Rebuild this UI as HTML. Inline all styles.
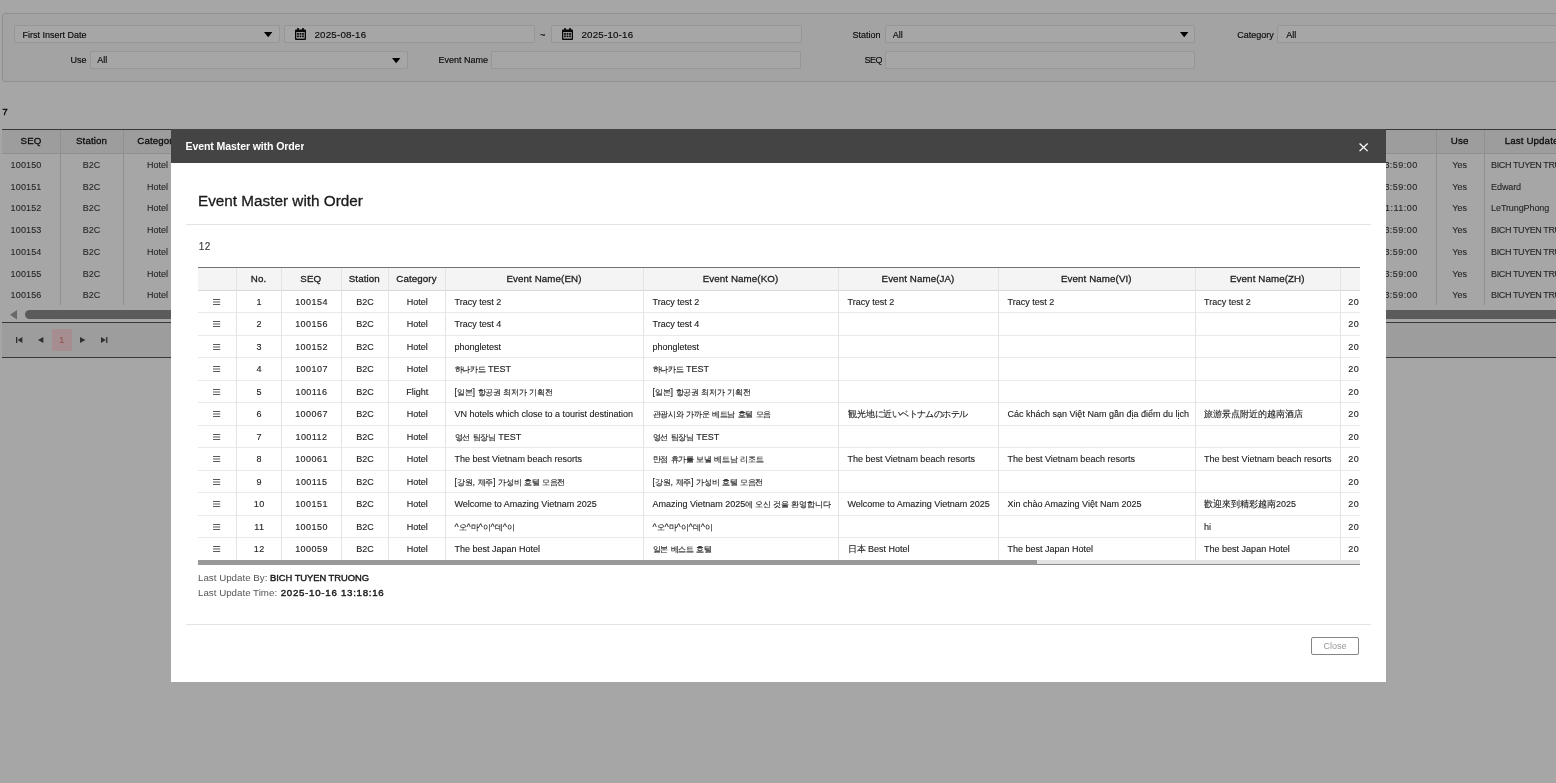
<!DOCTYPE html>
<html lang="en"><head><meta charset="utf-8"><title>Event Master with Order</title>
<style>
html,body{margin:0;padding:0;}
body{width:1556px;height:783px;overflow:hidden;position:relative;background:#fff;font-family:"Liberation Sans",sans-serif;}
#page,#dim,#modal{position:absolute;left:0;top:0;width:1556px;height:783px;overflow:hidden;}
#page,#modal{will-change:transform;}
#dim{background:rgba(0,0,0,.35);}
div{position:absolute;}
.t{white-space:nowrap;overflow:hidden;}
.a{position:absolute;display:block;overflow:visible;}
b{font-weight:normal;color:#1c1c1c;-webkit-text-stroke:.42px #1c1c1c;}
i{font-style:normal;display:inline-block;text-align:center;overflow:visible;white-space:nowrap;}
.k{font-size:8.3px;width:7.8px;}
.n{font-size:8.8px;width:8.4px;}
.h{width:9px;}
</style></head><body>
<div id="page">
<div style="left:2px;top:13px;width:1600px;height:66.5px;border:1px solid #dedede;border-radius:3px;background:#fbfafb;"></div>
<div style="left:14px;top:25px;width:265.5px;height:17.5px;border:1px solid #e6e6e6;border-radius:2px;background:#fff;box-sizing:border-box;"></div>
<div class="t" style="left:22.6px;top:27.0px;height:17.5px;line-height:17.5px;font-size:9px;color:#111;-webkit-text-stroke:.15px #111;">First Insert Date</div>
<svg class="a" style="left:263.8px;top:31.799999999999997px" width="8.4" height="5.2" viewBox="0 0 84 52"><path d="M0 0H84L42 52Z" fill="#000"/></svg>
<div style="left:284px;top:25px;width:250.5px;height:17.5px;border:1px solid #e6e6e6;border-radius:2px;background:#fff;box-sizing:border-box;"></div>
<svg class="a" style="left:295px;top:28px" width="11" height="12" viewBox="0 0 110 120"><path d="M22 0h16v14h34V0h16v14h12q10 0 10 10v86q0 10 -10 10H10q-10 0 -10 -10V24q0 -10 10 -10h12Z" fill="#0a0a0a"/><rect x="13" y="40" width="84" height="66" fill="#fff"/><rect x="21" y="49" width="18" height="19" fill="#111"/><rect x="46" y="49" width="18" height="19" fill="#111"/><rect x="71" y="49" width="18" height="19" fill="#111"/><rect x="21" y="75" width="18" height="17" fill="#111"/><rect x="46" y="75" width="18" height="17" fill="#111"/><rect x="71" y="75" width="18" height="17" fill="#111"/></svg>
<div class="t" style="left:314.5px;top:26.0px;height:17.5px;line-height:17.5px;font-size:9px;color:#111;-webkit-text-stroke:.15px #111;font-size:9.75px;letter-spacing:.19px;">2025-08-16</div>
<div class="t" style="left:540px;top:27.0px;height:17.5px;line-height:17.5px;font-size:9px;color:#111;-webkit-text-stroke:.15px #111;">~</div>
<div style="left:550.5px;top:25px;width:251.0px;height:17.5px;border:1px solid #e6e6e6;border-radius:2px;background:#fff;box-sizing:border-box;"></div>
<svg class="a" style="left:562px;top:28px" width="11" height="12" viewBox="0 0 110 120"><path d="M22 0h16v14h34V0h16v14h12q10 0 10 10v86q0 10 -10 10H10q-10 0 -10 -10V24q0 -10 10 -10h12Z" fill="#0a0a0a"/><rect x="13" y="40" width="84" height="66" fill="#fff"/><rect x="21" y="49" width="18" height="19" fill="#111"/><rect x="46" y="49" width="18" height="19" fill="#111"/><rect x="71" y="49" width="18" height="19" fill="#111"/><rect x="21" y="75" width="18" height="17" fill="#111"/><rect x="46" y="75" width="18" height="17" fill="#111"/><rect x="71" y="75" width="18" height="17" fill="#111"/></svg>
<div class="t" style="left:581.5px;top:26.0px;height:17.5px;line-height:17.5px;font-size:9px;color:#111;-webkit-text-stroke:.15px #111;font-size:9.75px;letter-spacing:.19px;">2025-10-16</div>
<div class="t" style="left:852.4px;top:27.0px;height:17.5px;line-height:17.5px;font-size:9px;color:#111;-webkit-text-stroke:.15px #111;">Station</div>
<div style="left:884.5px;top:25px;width:310.5px;height:17.5px;border:1px solid #e6e6e6;border-radius:2px;background:#fff;box-sizing:border-box;"></div>
<div class="t" style="left:892.8px;top:27.0px;height:17.5px;line-height:17.5px;font-size:9px;color:#111;-webkit-text-stroke:.15px #111;">All</div>
<svg class="a" style="left:1179.8px;top:31.799999999999997px" width="8.4" height="5.2" viewBox="0 0 84 52"><path d="M0 0H84L42 52Z" fill="#000"/></svg>
<div class="t" style="left:1237.2px;top:27.0px;height:17.5px;line-height:17.5px;font-size:9px;color:#111;-webkit-text-stroke:.15px #111;">Category</div>
<div style="left:1277.3px;top:25px;width:322.70000000000005px;height:17.5px;border:1px solid #e6e6e6;border-radius:2px;background:#fff;box-sizing:border-box;"></div>
<div class="t" style="left:1286.3px;top:27.0px;height:17.5px;line-height:17.5px;font-size:9px;color:#111;-webkit-text-stroke:.15px #111;">All</div>
<div class="t" style="left:70.5px;top:51.6px;height:17.5px;line-height:17.5px;font-size:9px;color:#111;-webkit-text-stroke:.15px #111;">Use</div>
<div style="left:90px;top:51px;width:317.5px;height:17.5px;border:1px solid #e6e6e6;border-radius:2px;background:#fff;box-sizing:border-box;"></div>
<div class="t" style="left:97.3px;top:51.6px;height:17.5px;line-height:17.5px;font-size:9px;color:#111;-webkit-text-stroke:.15px #111;">All</div>
<svg class="a" style="left:391.8px;top:57.8px" width="8.4" height="5.2" viewBox="0 0 84 52"><path d="M0 0H84L42 52Z" fill="#000"/></svg>
<div class="t" style="left:438.5px;top:51.6px;height:17.5px;line-height:17.5px;font-size:9px;color:#111;-webkit-text-stroke:.15px #111;">Event Name</div>
<div style="left:490.7px;top:51px;width:310.8px;height:17.5px;border:1px solid #e6e6e6;border-radius:2px;background:#fff;box-sizing:border-box;"></div>
<div class="t" style="left:864.6px;top:51.6px;height:17.5px;line-height:17.5px;font-size:9px;color:#111;-webkit-text-stroke:.15px #111;letter-spacing:-.55px;">SEQ</div>
<div style="left:884.5px;top:51px;width:310.5px;height:17.5px;border:1px solid #e6e6e6;border-radius:2px;background:#fff;box-sizing:border-box;"></div>
<div class="t" style="left:2.3px;top:103.6px;height:15px;line-height:15px;font-size:9.9px;color:#000;-webkit-text-stroke:.3px #000;">7</div>
<div style="left:2px;top:129px;width:1600px;height:1px;background:#555;"></div>
<div style="left:2px;top:130px;width:1600px;height:24px;background:#f1f1f1;border-bottom:1px solid #dcdcdc;box-sizing:border-box;"></div>
<div style="left:60px;top:130px;width:1px;height:174.5px;background:#dedede;"></div>
<div style="left:123px;top:130px;width:1px;height:174.5px;background:#dedede;"></div>
<div style="left:1435.6px;top:130px;width:1px;height:174.5px;background:#dedede;"></div>
<div style="left:1483.6px;top:130px;width:1px;height:174.5px;background:#dedede;"></div>
<div class="t" style="left:2px;top:129px;width:58px;height:24px;line-height:24px;font-size:9.75px;color:#111;text-align:center;-webkit-text-stroke:.28px #111;letter-spacing:.1px;">SEQ</div>
<div class="t" style="left:60px;top:129px;width:63px;height:24px;line-height:24px;font-size:9.75px;color:#111;text-align:center;-webkit-text-stroke:.28px #111;letter-spacing:.1px;">Station</div>
<div class="t" style="left:123px;top:129px;width:69px;height:24px;line-height:24px;font-size:9.75px;color:#111;text-align:center;-webkit-text-stroke:.28px #111;letter-spacing:.1px;">Category</div>
<div class="t" style="left:1435.6px;top:129px;width:48px;height:24px;line-height:24px;font-size:9.75px;color:#111;text-align:center;-webkit-text-stroke:.28px #111;letter-spacing:.1px;">Use</div>
<div class="t" style="left:1483.6px;top:129px;width:110.5px;height:24px;line-height:24px;font-size:9.75px;color:#111;text-align:center;-webkit-text-stroke:.28px #111;letter-spacing:.1px;">Last Update By</div>
<div class="t" style="left:10.6px;top:154.95px;height:21.75px;line-height:21.75px;font-size:9px;color:#3a3a3a;-webkit-text-stroke:.1px #3a3a3a;letter-spacing:.15px;">100150</div>
<div class="t" style="left:60px;top:154.95px;width:63px;height:21.75px;line-height:21.75px;font-size:9px;color:#3a3a3a;-webkit-text-stroke:.1px #3a3a3a;text-align:center;">B2C</div>
<div class="t" style="left:123px;top:154.95px;width:69px;height:21.75px;line-height:21.75px;font-size:9px;color:#3a3a3a;-webkit-text-stroke:.1px #3a3a3a;text-align:center;">Hotel</div>
<div class="t" style="left:1297.6px;top:154.95px;width:120px;height:21.75px;line-height:21.75px;font-size:9px;color:#3a3a3a;-webkit-text-stroke:.1px #3a3a3a;text-align:right;letter-spacing:.45px;">2025-12-31 23:59:00</div>
<div class="t" style="left:1435.6px;top:154.95px;width:48px;height:21.75px;line-height:21.75px;font-size:9px;color:#3a3a3a;-webkit-text-stroke:.1px #3a3a3a;text-align:center;">Yes</div>
<div class="t" style="left:1491.1px;top:154.95px;height:21.75px;line-height:21.75px;font-size:9px;color:#3a3a3a;-webkit-text-stroke:.1px #3a3a3a;letter-spacing:-.4px;">BICH TUYEN TRUONG</div>
<div class="t" style="left:10.6px;top:176.7px;height:21.75px;line-height:21.75px;font-size:9px;color:#3a3a3a;-webkit-text-stroke:.1px #3a3a3a;letter-spacing:.15px;">100151</div>
<div class="t" style="left:60px;top:176.7px;width:63px;height:21.75px;line-height:21.75px;font-size:9px;color:#3a3a3a;-webkit-text-stroke:.1px #3a3a3a;text-align:center;">B2C</div>
<div class="t" style="left:123px;top:176.7px;width:69px;height:21.75px;line-height:21.75px;font-size:9px;color:#3a3a3a;-webkit-text-stroke:.1px #3a3a3a;text-align:center;">Hotel</div>
<div class="t" style="left:1297.6px;top:176.7px;width:120px;height:21.75px;line-height:21.75px;font-size:9px;color:#3a3a3a;-webkit-text-stroke:.1px #3a3a3a;text-align:right;letter-spacing:.45px;">2025-12-31 23:59:00</div>
<div class="t" style="left:1435.6px;top:176.7px;width:48px;height:21.75px;line-height:21.75px;font-size:9px;color:#3a3a3a;-webkit-text-stroke:.1px #3a3a3a;text-align:center;">Yes</div>
<div class="t" style="left:1491.1px;top:176.7px;height:21.75px;line-height:21.75px;font-size:9px;color:#3a3a3a;-webkit-text-stroke:.1px #3a3a3a;letter-spacing:-.1px;">Edward</div>
<div class="t" style="left:10.6px;top:198.45px;height:21.75px;line-height:21.75px;font-size:9px;color:#3a3a3a;-webkit-text-stroke:.1px #3a3a3a;letter-spacing:.15px;">100152</div>
<div class="t" style="left:60px;top:198.45px;width:63px;height:21.75px;line-height:21.75px;font-size:9px;color:#3a3a3a;-webkit-text-stroke:.1px #3a3a3a;text-align:center;">B2C</div>
<div class="t" style="left:123px;top:198.45px;width:69px;height:21.75px;line-height:21.75px;font-size:9px;color:#3a3a3a;-webkit-text-stroke:.1px #3a3a3a;text-align:center;">Hotel</div>
<div class="t" style="left:1297.6px;top:198.45px;width:120px;height:21.75px;line-height:21.75px;font-size:9px;color:#3a3a3a;-webkit-text-stroke:.1px #3a3a3a;text-align:right;letter-spacing:.45px;">2025-12-31 11:11:00</div>
<div class="t" style="left:1435.6px;top:198.45px;width:48px;height:21.75px;line-height:21.75px;font-size:9px;color:#3a3a3a;-webkit-text-stroke:.1px #3a3a3a;text-align:center;">Yes</div>
<div class="t" style="left:1491.1px;top:198.45px;height:21.75px;line-height:21.75px;font-size:9px;color:#3a3a3a;-webkit-text-stroke:.1px #3a3a3a;letter-spacing:-.1px;">LeTrungPhong</div>
<div class="t" style="left:10.6px;top:220.2px;height:21.75px;line-height:21.75px;font-size:9px;color:#3a3a3a;-webkit-text-stroke:.1px #3a3a3a;letter-spacing:.15px;">100153</div>
<div class="t" style="left:60px;top:220.2px;width:63px;height:21.75px;line-height:21.75px;font-size:9px;color:#3a3a3a;-webkit-text-stroke:.1px #3a3a3a;text-align:center;">B2C</div>
<div class="t" style="left:123px;top:220.2px;width:69px;height:21.75px;line-height:21.75px;font-size:9px;color:#3a3a3a;-webkit-text-stroke:.1px #3a3a3a;text-align:center;">Hotel</div>
<div class="t" style="left:1297.6px;top:220.2px;width:120px;height:21.75px;line-height:21.75px;font-size:9px;color:#3a3a3a;-webkit-text-stroke:.1px #3a3a3a;text-align:right;letter-spacing:.45px;">2025-12-31 23:59:00</div>
<div class="t" style="left:1435.6px;top:220.2px;width:48px;height:21.75px;line-height:21.75px;font-size:9px;color:#3a3a3a;-webkit-text-stroke:.1px #3a3a3a;text-align:center;">Yes</div>
<div class="t" style="left:1491.1px;top:220.2px;height:21.75px;line-height:21.75px;font-size:9px;color:#3a3a3a;-webkit-text-stroke:.1px #3a3a3a;letter-spacing:-.4px;">BICH TUYEN TRUONG</div>
<div class="t" style="left:10.6px;top:241.95px;height:21.75px;line-height:21.75px;font-size:9px;color:#3a3a3a;-webkit-text-stroke:.1px #3a3a3a;letter-spacing:.15px;">100154</div>
<div class="t" style="left:60px;top:241.95px;width:63px;height:21.75px;line-height:21.75px;font-size:9px;color:#3a3a3a;-webkit-text-stroke:.1px #3a3a3a;text-align:center;">B2C</div>
<div class="t" style="left:123px;top:241.95px;width:69px;height:21.75px;line-height:21.75px;font-size:9px;color:#3a3a3a;-webkit-text-stroke:.1px #3a3a3a;text-align:center;">Hotel</div>
<div class="t" style="left:1297.6px;top:241.95px;width:120px;height:21.75px;line-height:21.75px;font-size:9px;color:#3a3a3a;-webkit-text-stroke:.1px #3a3a3a;text-align:right;letter-spacing:.45px;">2025-12-31 23:59:00</div>
<div class="t" style="left:1435.6px;top:241.95px;width:48px;height:21.75px;line-height:21.75px;font-size:9px;color:#3a3a3a;-webkit-text-stroke:.1px #3a3a3a;text-align:center;">Yes</div>
<div class="t" style="left:1491.1px;top:241.95px;height:21.75px;line-height:21.75px;font-size:9px;color:#3a3a3a;-webkit-text-stroke:.1px #3a3a3a;letter-spacing:-.4px;">BICH TUYEN TRUONG</div>
<div class="t" style="left:10.6px;top:263.7px;height:21.75px;line-height:21.75px;font-size:9px;color:#3a3a3a;-webkit-text-stroke:.1px #3a3a3a;letter-spacing:.15px;">100155</div>
<div class="t" style="left:60px;top:263.7px;width:63px;height:21.75px;line-height:21.75px;font-size:9px;color:#3a3a3a;-webkit-text-stroke:.1px #3a3a3a;text-align:center;">B2C</div>
<div class="t" style="left:123px;top:263.7px;width:69px;height:21.75px;line-height:21.75px;font-size:9px;color:#3a3a3a;-webkit-text-stroke:.1px #3a3a3a;text-align:center;">Hotel</div>
<div class="t" style="left:1297.6px;top:263.7px;width:120px;height:21.75px;line-height:21.75px;font-size:9px;color:#3a3a3a;-webkit-text-stroke:.1px #3a3a3a;text-align:right;letter-spacing:.45px;">2025-12-31 23:59:00</div>
<div class="t" style="left:1435.6px;top:263.7px;width:48px;height:21.75px;line-height:21.75px;font-size:9px;color:#3a3a3a;-webkit-text-stroke:.1px #3a3a3a;text-align:center;">Yes</div>
<div class="t" style="left:1491.1px;top:263.7px;height:21.75px;line-height:21.75px;font-size:9px;color:#3a3a3a;-webkit-text-stroke:.1px #3a3a3a;letter-spacing:-.4px;">BICH TUYEN TRUONG</div>
<div class="t" style="left:10.6px;top:285.45px;height:21.75px;line-height:21.75px;font-size:9px;color:#3a3a3a;-webkit-text-stroke:.1px #3a3a3a;letter-spacing:.15px;">100156</div>
<div class="t" style="left:60px;top:285.45px;width:63px;height:21.75px;line-height:21.75px;font-size:9px;color:#3a3a3a;-webkit-text-stroke:.1px #3a3a3a;text-align:center;">B2C</div>
<div class="t" style="left:123px;top:285.45px;width:69px;height:21.75px;line-height:21.75px;font-size:9px;color:#3a3a3a;-webkit-text-stroke:.1px #3a3a3a;text-align:center;">Hotel</div>
<div class="t" style="left:1297.6px;top:285.45px;width:120px;height:21.75px;line-height:21.75px;font-size:9px;color:#3a3a3a;-webkit-text-stroke:.1px #3a3a3a;text-align:right;letter-spacing:.45px;">2025-12-31 23:59:00</div>
<div class="t" style="left:1435.6px;top:285.45px;width:48px;height:21.75px;line-height:21.75px;font-size:9px;color:#3a3a3a;-webkit-text-stroke:.1px #3a3a3a;text-align:center;">Yes</div>
<div class="t" style="left:1491.1px;top:285.45px;height:21.75px;line-height:21.75px;font-size:9px;color:#3a3a3a;-webkit-text-stroke:.1px #3a3a3a;letter-spacing:-.4px;">BICH TUYEN TRUONG</div>
<svg class="a" style="left:10px;top:310px" width="7" height="9.4" viewBox="0 0 70 94"><path d="M70 0V94L0 47Z" fill="#a0a0a0"/></svg>
<div style="left:25px;top:310px;width:1600px;height:8.8px;background:#8c8c8c;border-radius:4.5px;"></div>
<div style="left:2px;top:322px;width:1600px;height:1px;background:#555;"></div>
<div style="left:2px;top:323px;width:1600px;height:34px;background:#f1f1f1;"></div>
<div style="left:2px;top:357px;width:1600px;height:1px;background:#555;"></div>
<div style="left:51.6px;top:329px;width:20.4px;height:22px;background:#ffd9dc;"></div>
<div class="t" style="left:51.6px;top:329px;width:20.4px;height:22px;line-height:22px;font-size:9.75px;color:#e07b75;text-align:center;">1</div>
<svg class="a" style="left:15.6px;top:336.9px" width="6.4" height="6" viewBox="0 0 64 60"><rect x="0" y="0" width="13" height="60" fill="#4a4a4a"/><path d="M64 0V60L16 30Z" fill="#4a4a4a"/></svg>
<svg class="a" style="left:37.8px;top:336.9px" width="5.4" height="6" viewBox="0 0 54 60"><path d="M54 0V60L0 30Z" fill="#4a4a4a"/></svg>
<svg class="a" style="left:80.1px;top:336.9px" width="5.4" height="6" viewBox="0 0 54 60"><path d="M0 0V60L54 30Z" fill="#4a4a4a"/></svg>
<svg class="a" style="left:100.8px;top:336.9px" width="6.4" height="6" viewBox="0 0 64 60"><rect x="51" y="0" width="13" height="60" fill="#4a4a4a"/><path d="M0 0V60L48 30Z" fill="#4a4a4a"/></svg>
</div>
<div id="dim"></div>
<div id="modal">
<div style="left:171px;top:129px;width:1215px;height:553px;background:#fff;"></div>
<div style="left:171px;top:129px;width:1215px;height:33.5px;background:#444;"></div>
<div class="t" style="left:185.5px;top:130px;height:33.5px;line-height:33.5px;font-size:10.6px;font-weight:bold;color:#fff;letter-spacing:-.13px;">Event Master with Order</div>
<svg class="a" style="left:1358.8px;top:142.9px" width="9.2" height="8.6" preserveAspectRatio="none" viewBox="0 0 100 100"><path d="M6 6L94 94M94 6L6 94" stroke="#fff" stroke-width="14" fill="none"/></svg>
<div class="t" style="left:198px;top:190px;height:22px;line-height:22px;font-size:15.3px;color:#1a1a1a;-webkit-text-stroke:.3px #1a1a1a;">Event Master with Order</div>
<div style="left:186px;top:224px;width:1185px;height:1px;background:#e4e4e4;"></div>
<div class="t" style="left:198.8px;top:238.6px;height:15px;line-height:15px;font-size:10px;color:#3a3a3a;letter-spacing:.5px;-webkit-text-stroke:.15px #3a3a3a;">12</div>
<div style="left:198px;top:267px;width:1162px;height:1px;background:#727272;"></div>
<div style="left:198px;top:268px;width:1162px;height:22.80000000000001px;background:#f4f4f4;border-bottom:1px solid #d8d8d8;box-sizing:border-box;"></div>
<div style="left:198px;top:267px;width:1162px;height:293px;overflow:hidden;"><div class="t" style="left:38px;top:1px;width:45px;height:22.80000000000001px;line-height:22.80000000000001px;font-size:9.75px;color:#1c1c1c;text-align:center;-webkit-text-stroke:.28px #1c1c1c;letter-spacing:.1px;">No.</div><div class="t" style="left:83px;top:1px;width:59.5px;height:22.80000000000001px;line-height:22.80000000000001px;font-size:9.75px;color:#1c1c1c;text-align:center;-webkit-text-stroke:.28px #1c1c1c;letter-spacing:.1px;">SEQ</div><div class="t" style="left:142.5px;top:1px;width:47.5px;height:22.80000000000001px;line-height:22.80000000000001px;font-size:9.75px;color:#1c1c1c;text-align:center;-webkit-text-stroke:.28px #1c1c1c;letter-spacing:.1px;">Station</div><div class="t" style="left:190px;top:1px;width:57px;height:22.80000000000001px;line-height:22.80000000000001px;font-size:9.75px;color:#1c1c1c;text-align:center;-webkit-text-stroke:.28px #1c1c1c;letter-spacing:.1px;">Category</div><div class="t" style="left:247px;top:1px;width:198px;height:22.80000000000001px;line-height:22.80000000000001px;font-size:9.75px;color:#1c1c1c;text-align:center;-webkit-text-stroke:.28px #1c1c1c;letter-spacing:.1px;">Event Name(EN)</div><div class="t" style="left:445px;top:1px;width:195px;height:22.80000000000001px;line-height:22.80000000000001px;font-size:9.75px;color:#1c1c1c;text-align:center;-webkit-text-stroke:.28px #1c1c1c;letter-spacing:.1px;">Event Name(KO)</div><div class="t" style="left:640px;top:1px;width:160px;height:22.80000000000001px;line-height:22.80000000000001px;font-size:9.75px;color:#1c1c1c;text-align:center;-webkit-text-stroke:.28px #1c1c1c;letter-spacing:.1px;">Event Name(JA)</div><div class="t" style="left:800px;top:1px;width:196.5999999999999px;height:22.80000000000001px;line-height:22.80000000000001px;font-size:9.75px;color:#1c1c1c;text-align:center;-webkit-text-stroke:.28px #1c1c1c;letter-spacing:.1px;">Event Name(VI)</div><div class="t" style="left:996.5999999999999px;top:1px;width:145.4000000000001px;height:22.80000000000001px;line-height:22.80000000000001px;font-size:9.75px;color:#1c1c1c;text-align:center;-webkit-text-stroke:.28px #1c1c1c;letter-spacing:.1px;">Event Name(ZH)</div><div style="left:0px;top:45.30000000000001px;width:1162px;height:1px;background:#e9e9e9;"></div><svg class="a" style="left:15.199999999999989px;top:31.750000000000014px" width="7.2" height="6" viewBox="0 0 72 60"><path d="M0 5H72M0 30H72M0 55H72" stroke="#3c3c3c" stroke-width="8.5"/></svg><div class="t" style="left:38px;top:24.70000000000001px;width:45px;height:21.5px;line-height:21.5px;font-size:9px;color:#222;-webkit-text-stroke:.12px #222;text-align:center;padding-left:1.5px;box-sizing:border-box;letter-spacing:.4px;">1</div><div class="t" style="left:83px;top:24.70000000000001px;width:59.5px;height:21.5px;line-height:21.5px;font-size:9px;color:#222;-webkit-text-stroke:.12px #222;text-align:center;padding-left:1.5px;box-sizing:border-box;letter-spacing:.45px;">100154</div><div class="t" style="left:142.5px;top:24.70000000000001px;width:47.5px;height:21.5px;line-height:21.5px;font-size:9px;color:#222;-webkit-text-stroke:.12px #222;text-align:center;padding-left:1.5px;box-sizing:border-box;">B2C</div><div class="t" style="left:190px;top:24.70000000000001px;width:57px;height:21.5px;line-height:21.5px;font-size:9px;color:#222;-webkit-text-stroke:.12px #222;text-align:center;padding-left:1.5px;box-sizing:border-box;">Hotel</div><div class="t" style="left:247px;top:24.70000000000001px;width:198px;height:21.5px;line-height:21.5px;font-size:9px;color:#222;-webkit-text-stroke:.12px #222;padding-left:9.5px;box-sizing:border-box;">Tracy test 2</div><div class="t" style="left:445px;top:24.70000000000001px;width:195px;height:21.5px;line-height:21.5px;font-size:9px;color:#222;-webkit-text-stroke:.12px #222;padding-left:9.5px;box-sizing:border-box;">Tracy test 2</div><div class="t" style="left:640px;top:24.70000000000001px;width:160px;height:21.5px;line-height:21.5px;font-size:9px;color:#222;-webkit-text-stroke:.12px #222;padding-left:9.5px;box-sizing:border-box;">Tracy test 2</div><div class="t" style="left:800px;top:24.70000000000001px;width:196.5999999999999px;height:21.5px;line-height:21.5px;font-size:9px;color:#222;-webkit-text-stroke:.12px #222;padding-left:9.5px;box-sizing:border-box;">Tracy test 2</div><div class="t" style="left:996.5999999999999px;top:24.70000000000001px;width:145.4000000000001px;height:21.5px;line-height:21.5px;font-size:9px;color:#222;-webkit-text-stroke:.12px #222;padding-left:9.5px;box-sizing:border-box;">Tracy test 2</div><div class="t" style="left:1142px;top:24.70000000000001px;width:160px;height:21.5px;line-height:21.5px;font-size:9px;color:#222;-webkit-text-stroke:.12px #222;padding-left:8.2px;box-sizing:border-box;letter-spacing:.45px;">20</div><div style="left:0px;top:67.80000000000001px;width:1162px;height:1px;background:#e9e9e9;"></div><svg class="a" style="left:15.199999999999989px;top:54.250000000000014px" width="7.2" height="6" viewBox="0 0 72 60"><path d="M0 5H72M0 30H72M0 55H72" stroke="#3c3c3c" stroke-width="8.5"/></svg><div class="t" style="left:38px;top:47.20000000000001px;width:45px;height:21.5px;line-height:21.5px;font-size:9px;color:#222;-webkit-text-stroke:.12px #222;text-align:center;padding-left:1.5px;box-sizing:border-box;letter-spacing:.4px;">2</div><div class="t" style="left:83px;top:47.20000000000001px;width:59.5px;height:21.5px;line-height:21.5px;font-size:9px;color:#222;-webkit-text-stroke:.12px #222;text-align:center;padding-left:1.5px;box-sizing:border-box;letter-spacing:.45px;">100156</div><div class="t" style="left:142.5px;top:47.20000000000001px;width:47.5px;height:21.5px;line-height:21.5px;font-size:9px;color:#222;-webkit-text-stroke:.12px #222;text-align:center;padding-left:1.5px;box-sizing:border-box;">B2C</div><div class="t" style="left:190px;top:47.20000000000001px;width:57px;height:21.5px;line-height:21.5px;font-size:9px;color:#222;-webkit-text-stroke:.12px #222;text-align:center;padding-left:1.5px;box-sizing:border-box;">Hotel</div><div class="t" style="left:247px;top:47.20000000000001px;width:198px;height:21.5px;line-height:21.5px;font-size:9px;color:#222;-webkit-text-stroke:.12px #222;padding-left:9.5px;box-sizing:border-box;">Tracy test 4</div><div class="t" style="left:445px;top:47.20000000000001px;width:195px;height:21.5px;line-height:21.5px;font-size:9px;color:#222;-webkit-text-stroke:.12px #222;padding-left:9.5px;box-sizing:border-box;">Tracy test 4</div><div class="t" style="left:1142px;top:47.20000000000001px;width:160px;height:21.5px;line-height:21.5px;font-size:9px;color:#222;-webkit-text-stroke:.12px #222;padding-left:8.2px;box-sizing:border-box;letter-spacing:.45px;">20</div><div style="left:0px;top:90.30000000000001px;width:1162px;height:1px;background:#e9e9e9;"></div><svg class="a" style="left:15.199999999999989px;top:76.75000000000001px" width="7.2" height="6" viewBox="0 0 72 60"><path d="M0 5H72M0 30H72M0 55H72" stroke="#3c3c3c" stroke-width="8.5"/></svg><div class="t" style="left:38px;top:69.70000000000002px;width:45px;height:21.5px;line-height:21.5px;font-size:9px;color:#222;-webkit-text-stroke:.12px #222;text-align:center;padding-left:1.5px;box-sizing:border-box;letter-spacing:.4px;">3</div><div class="t" style="left:83px;top:69.70000000000002px;width:59.5px;height:21.5px;line-height:21.5px;font-size:9px;color:#222;-webkit-text-stroke:.12px #222;text-align:center;padding-left:1.5px;box-sizing:border-box;letter-spacing:.45px;">100152</div><div class="t" style="left:142.5px;top:69.70000000000002px;width:47.5px;height:21.5px;line-height:21.5px;font-size:9px;color:#222;-webkit-text-stroke:.12px #222;text-align:center;padding-left:1.5px;box-sizing:border-box;">B2C</div><div class="t" style="left:190px;top:69.70000000000002px;width:57px;height:21.5px;line-height:21.5px;font-size:9px;color:#222;-webkit-text-stroke:.12px #222;text-align:center;padding-left:1.5px;box-sizing:border-box;">Hotel</div><div class="t" style="left:247px;top:69.70000000000002px;width:198px;height:21.5px;line-height:21.5px;font-size:9px;color:#222;-webkit-text-stroke:.12px #222;padding-left:9.5px;box-sizing:border-box;">phongletest</div><div class="t" style="left:445px;top:69.70000000000002px;width:195px;height:21.5px;line-height:21.5px;font-size:9px;color:#222;-webkit-text-stroke:.12px #222;padding-left:9.5px;box-sizing:border-box;">phongletest</div><div class="t" style="left:1142px;top:69.70000000000002px;width:160px;height:21.5px;line-height:21.5px;font-size:9px;color:#222;-webkit-text-stroke:.12px #222;padding-left:8.2px;box-sizing:border-box;letter-spacing:.45px;">20</div><div style="left:0px;top:112.80000000000001px;width:1162px;height:1px;background:#e9e9e9;"></div><svg class="a" style="left:15.199999999999989px;top:99.25000000000001px" width="7.2" height="6" viewBox="0 0 72 60"><path d="M0 5H72M0 30H72M0 55H72" stroke="#3c3c3c" stroke-width="8.5"/></svg><div class="t" style="left:38px;top:92.20000000000002px;width:45px;height:21.5px;line-height:21.5px;font-size:9px;color:#222;-webkit-text-stroke:.12px #222;text-align:center;padding-left:1.5px;box-sizing:border-box;letter-spacing:.4px;">4</div><div class="t" style="left:83px;top:92.20000000000002px;width:59.5px;height:21.5px;line-height:21.5px;font-size:9px;color:#222;-webkit-text-stroke:.12px #222;text-align:center;padding-left:1.5px;box-sizing:border-box;letter-spacing:.45px;">100107</div><div class="t" style="left:142.5px;top:92.20000000000002px;width:47.5px;height:21.5px;line-height:21.5px;font-size:9px;color:#222;-webkit-text-stroke:.12px #222;text-align:center;padding-left:1.5px;box-sizing:border-box;">B2C</div><div class="t" style="left:190px;top:92.20000000000002px;width:57px;height:21.5px;line-height:21.5px;font-size:9px;color:#222;-webkit-text-stroke:.12px #222;text-align:center;padding-left:1.5px;box-sizing:border-box;">Hotel</div><div class="t" style="left:247px;top:92.20000000000002px;width:198px;height:21.5px;line-height:21.5px;font-size:9px;color:#222;-webkit-text-stroke:.12px #222;padding-left:9.5px;box-sizing:border-box;word-spacing:-.1px;"><i class="k">하</i><i class="k">나</i><i class="k">카</i><i class="k">드</i> TEST</div><div class="t" style="left:445px;top:92.20000000000002px;width:195px;height:21.5px;line-height:21.5px;font-size:9px;color:#222;-webkit-text-stroke:.12px #222;padding-left:9.5px;box-sizing:border-box;word-spacing:-.1px;"><i class="k">하</i><i class="k">나</i><i class="k">카</i><i class="k">드</i> TEST</div><div class="t" style="left:1142px;top:92.20000000000002px;width:160px;height:21.5px;line-height:21.5px;font-size:9px;color:#222;-webkit-text-stroke:.12px #222;padding-left:8.2px;box-sizing:border-box;letter-spacing:.45px;">20</div><div style="left:0px;top:135.3px;width:1162px;height:1px;background:#e9e9e9;"></div><svg class="a" style="left:15.199999999999989px;top:121.75000000000001px" width="7.2" height="6" viewBox="0 0 72 60"><path d="M0 5H72M0 30H72M0 55H72" stroke="#3c3c3c" stroke-width="8.5"/></svg><div class="t" style="left:38px;top:114.70000000000002px;width:45px;height:21.5px;line-height:21.5px;font-size:9px;color:#222;-webkit-text-stroke:.12px #222;text-align:center;padding-left:1.5px;box-sizing:border-box;letter-spacing:.4px;">5</div><div class="t" style="left:83px;top:114.70000000000002px;width:59.5px;height:21.5px;line-height:21.5px;font-size:9px;color:#222;-webkit-text-stroke:.12px #222;text-align:center;padding-left:1.5px;box-sizing:border-box;letter-spacing:.45px;">100116</div><div class="t" style="left:142.5px;top:114.70000000000002px;width:47.5px;height:21.5px;line-height:21.5px;font-size:9px;color:#222;-webkit-text-stroke:.12px #222;text-align:center;padding-left:1.5px;box-sizing:border-box;">B2C</div><div class="t" style="left:190px;top:114.70000000000002px;width:57px;height:21.5px;line-height:21.5px;font-size:9px;color:#222;-webkit-text-stroke:.12px #222;text-align:center;padding-left:1.5px;box-sizing:border-box;">Flight</div><div class="t" style="left:247px;top:114.70000000000002px;width:198px;height:21.5px;line-height:21.5px;font-size:9px;color:#222;-webkit-text-stroke:.12px #222;padding-left:9.5px;box-sizing:border-box;word-spacing:-.1px;">[<i class="k">일</i><i class="k">본</i>] <i class="k">항</i><i class="k">공</i><i class="k">권</i> <i class="k">최</i><i class="k">저</i><i class="k">가</i> <i class="k">기</i><i class="k">획</i><i class="k">전</i></div><div class="t" style="left:445px;top:114.70000000000002px;width:195px;height:21.5px;line-height:21.5px;font-size:9px;color:#222;-webkit-text-stroke:.12px #222;padding-left:9.5px;box-sizing:border-box;word-spacing:-.1px;">[<i class="k">일</i><i class="k">본</i>] <i class="k">항</i><i class="k">공</i><i class="k">권</i> <i class="k">최</i><i class="k">저</i><i class="k">가</i> <i class="k">기</i><i class="k">획</i><i class="k">전</i></div><div class="t" style="left:1142px;top:114.70000000000002px;width:160px;height:21.5px;line-height:21.5px;font-size:9px;color:#222;-webkit-text-stroke:.12px #222;padding-left:8.2px;box-sizing:border-box;letter-spacing:.45px;">20</div><div style="left:0px;top:157.8px;width:1162px;height:1px;background:#e9e9e9;"></div><svg class="a" style="left:15.199999999999989px;top:144.25px" width="7.2" height="6" viewBox="0 0 72 60"><path d="M0 5H72M0 30H72M0 55H72" stroke="#3c3c3c" stroke-width="8.5"/></svg><div class="t" style="left:38px;top:137.20000000000002px;width:45px;height:21.5px;line-height:21.5px;font-size:9px;color:#222;-webkit-text-stroke:.12px #222;text-align:center;padding-left:1.5px;box-sizing:border-box;letter-spacing:.4px;">6</div><div class="t" style="left:83px;top:137.20000000000002px;width:59.5px;height:21.5px;line-height:21.5px;font-size:9px;color:#222;-webkit-text-stroke:.12px #222;text-align:center;padding-left:1.5px;box-sizing:border-box;letter-spacing:.45px;">100067</div><div class="t" style="left:142.5px;top:137.20000000000002px;width:47.5px;height:21.5px;line-height:21.5px;font-size:9px;color:#222;-webkit-text-stroke:.12px #222;text-align:center;padding-left:1.5px;box-sizing:border-box;">B2C</div><div class="t" style="left:190px;top:137.20000000000002px;width:57px;height:21.5px;line-height:21.5px;font-size:9px;color:#222;-webkit-text-stroke:.12px #222;text-align:center;padding-left:1.5px;box-sizing:border-box;">Hotel</div><div class="t" style="left:247px;top:137.20000000000002px;width:198px;height:21.5px;line-height:21.5px;font-size:9px;color:#222;-webkit-text-stroke:.12px #222;padding-left:9.5px;box-sizing:border-box;">VN hotels which close to a tourist destination</div><div class="t" style="left:445px;top:137.20000000000002px;width:195px;height:21.5px;line-height:21.5px;font-size:9px;color:#222;-webkit-text-stroke:.12px #222;padding-left:9.5px;box-sizing:border-box;word-spacing:-.1px;"><i class="k">관</i><i class="k">광</i><i class="k">시</i><i class="k">와</i> <i class="k">가</i><i class="k">까</i><i class="k">운</i> <i class="k">베</i><i class="k">트</i><i class="k">남</i> <i class="k">호</i><i class="k">텔</i> <i class="k">모</i><i class="k">음</i></div><div class="t" style="left:640px;top:137.20000000000002px;width:160px;height:21.5px;line-height:21.5px;font-size:9px;color:#222;-webkit-text-stroke:.12px #222;padding-left:9.5px;box-sizing:border-box;"><i class="h">観</i><i class="h">光</i><i class="h">地</i><i class="n">に</i><i class="h">近</i><i class="n">い</i><i class="n">ベ</i><i class="n">ト</i><i class="n">ナ</i><i class="n">ム</i><i class="n">の</i><i class="n">ホ</i><i class="n">テ</i><i class="n">ル</i></div><div class="t" style="left:800px;top:137.20000000000002px;width:196.5999999999999px;height:21.5px;line-height:21.5px;font-size:9px;color:#222;-webkit-text-stroke:.12px #222;padding-left:9.5px;box-sizing:border-box;">Các khách sạn Việt Nam gần địa điểm du lịch</div><div class="t" style="left:996.5999999999999px;top:137.20000000000002px;width:145.4000000000001px;height:21.5px;line-height:21.5px;font-size:9px;color:#222;-webkit-text-stroke:.12px #222;padding-left:9.5px;box-sizing:border-box;"><i class="h">旅</i><i class="h">游</i><i class="h">景</i><i class="h">点</i><i class="h">附</i><i class="h">近</i><i class="h">的</i><i class="h">越</i><i class="h">南</i><i class="h">酒</i><i class="h">店</i></div><div class="t" style="left:1142px;top:137.20000000000002px;width:160px;height:21.5px;line-height:21.5px;font-size:9px;color:#222;-webkit-text-stroke:.12px #222;padding-left:8.2px;box-sizing:border-box;letter-spacing:.45px;">20</div><div style="left:0px;top:180.3px;width:1162px;height:1px;background:#e9e9e9;"></div><svg class="a" style="left:15.199999999999989px;top:166.75px" width="7.2" height="6" viewBox="0 0 72 60"><path d="M0 5H72M0 30H72M0 55H72" stroke="#3c3c3c" stroke-width="8.5"/></svg><div class="t" style="left:38px;top:159.70000000000002px;width:45px;height:21.5px;line-height:21.5px;font-size:9px;color:#222;-webkit-text-stroke:.12px #222;text-align:center;padding-left:1.5px;box-sizing:border-box;letter-spacing:.4px;">7</div><div class="t" style="left:83px;top:159.70000000000002px;width:59.5px;height:21.5px;line-height:21.5px;font-size:9px;color:#222;-webkit-text-stroke:.12px #222;text-align:center;padding-left:1.5px;box-sizing:border-box;letter-spacing:.45px;">100112</div><div class="t" style="left:142.5px;top:159.70000000000002px;width:47.5px;height:21.5px;line-height:21.5px;font-size:9px;color:#222;-webkit-text-stroke:.12px #222;text-align:center;padding-left:1.5px;box-sizing:border-box;">B2C</div><div class="t" style="left:190px;top:159.70000000000002px;width:57px;height:21.5px;line-height:21.5px;font-size:9px;color:#222;-webkit-text-stroke:.12px #222;text-align:center;padding-left:1.5px;box-sizing:border-box;">Hotel</div><div class="t" style="left:247px;top:159.70000000000002px;width:198px;height:21.5px;line-height:21.5px;font-size:9px;color:#222;-webkit-text-stroke:.12px #222;padding-left:9.5px;box-sizing:border-box;word-spacing:-.1px;"><i class="k">영</i><i class="k">선</i> <i class="k">팀</i><i class="k">장</i><i class="k">님</i> TEST</div><div class="t" style="left:445px;top:159.70000000000002px;width:195px;height:21.5px;line-height:21.5px;font-size:9px;color:#222;-webkit-text-stroke:.12px #222;padding-left:9.5px;box-sizing:border-box;word-spacing:-.1px;"><i class="k">영</i><i class="k">선</i> <i class="k">팀</i><i class="k">장</i><i class="k">님</i> TEST</div><div class="t" style="left:1142px;top:159.70000000000002px;width:160px;height:21.5px;line-height:21.5px;font-size:9px;color:#222;-webkit-text-stroke:.12px #222;padding-left:8.2px;box-sizing:border-box;letter-spacing:.45px;">20</div><div style="left:0px;top:202.8px;width:1162px;height:1px;background:#e9e9e9;"></div><svg class="a" style="left:15.199999999999989px;top:189.25px" width="7.2" height="6" viewBox="0 0 72 60"><path d="M0 5H72M0 30H72M0 55H72" stroke="#3c3c3c" stroke-width="8.5"/></svg><div class="t" style="left:38px;top:182.20000000000002px;width:45px;height:21.5px;line-height:21.5px;font-size:9px;color:#222;-webkit-text-stroke:.12px #222;text-align:center;padding-left:1.5px;box-sizing:border-box;letter-spacing:.4px;">8</div><div class="t" style="left:83px;top:182.20000000000002px;width:59.5px;height:21.5px;line-height:21.5px;font-size:9px;color:#222;-webkit-text-stroke:.12px #222;text-align:center;padding-left:1.5px;box-sizing:border-box;letter-spacing:.45px;">100061</div><div class="t" style="left:142.5px;top:182.20000000000002px;width:47.5px;height:21.5px;line-height:21.5px;font-size:9px;color:#222;-webkit-text-stroke:.12px #222;text-align:center;padding-left:1.5px;box-sizing:border-box;">B2C</div><div class="t" style="left:190px;top:182.20000000000002px;width:57px;height:21.5px;line-height:21.5px;font-size:9px;color:#222;-webkit-text-stroke:.12px #222;text-align:center;padding-left:1.5px;box-sizing:border-box;">Hotel</div><div class="t" style="left:247px;top:182.20000000000002px;width:198px;height:21.5px;line-height:21.5px;font-size:9px;color:#222;-webkit-text-stroke:.12px #222;padding-left:9.5px;box-sizing:border-box;">The best Vietnam beach resorts</div><div class="t" style="left:445px;top:182.20000000000002px;width:195px;height:21.5px;line-height:21.5px;font-size:9px;color:#222;-webkit-text-stroke:.12px #222;padding-left:9.5px;box-sizing:border-box;word-spacing:-.1px;"><i class="k">만</i><i class="k">점</i> <i class="k">휴</i><i class="k">가</i><i class="k">를</i> <i class="k">보</i><i class="k">낼</i> <i class="k">베</i><i class="k">트</i><i class="k">남</i> <i class="k">리</i><i class="k">조</i><i class="k">트</i></div><div class="t" style="left:640px;top:182.20000000000002px;width:160px;height:21.5px;line-height:21.5px;font-size:9px;color:#222;-webkit-text-stroke:.12px #222;padding-left:9.5px;box-sizing:border-box;">The best Vietnam beach resorts</div><div class="t" style="left:800px;top:182.20000000000002px;width:196.5999999999999px;height:21.5px;line-height:21.5px;font-size:9px;color:#222;-webkit-text-stroke:.12px #222;padding-left:9.5px;box-sizing:border-box;">The best Vietnam beach resorts</div><div class="t" style="left:996.5999999999999px;top:182.20000000000002px;width:145.4000000000001px;height:21.5px;line-height:21.5px;font-size:9px;color:#222;-webkit-text-stroke:.12px #222;padding-left:9.5px;box-sizing:border-box;">The best Vietnam beach resorts</div><div class="t" style="left:1142px;top:182.20000000000002px;width:160px;height:21.5px;line-height:21.5px;font-size:9px;color:#222;-webkit-text-stroke:.12px #222;padding-left:8.2px;box-sizing:border-box;letter-spacing:.45px;">20</div><div style="left:0px;top:225.3px;width:1162px;height:1px;background:#e9e9e9;"></div><svg class="a" style="left:15.199999999999989px;top:211.75px" width="7.2" height="6" viewBox="0 0 72 60"><path d="M0 5H72M0 30H72M0 55H72" stroke="#3c3c3c" stroke-width="8.5"/></svg><div class="t" style="left:38px;top:204.70000000000002px;width:45px;height:21.5px;line-height:21.5px;font-size:9px;color:#222;-webkit-text-stroke:.12px #222;text-align:center;padding-left:1.5px;box-sizing:border-box;letter-spacing:.4px;">9</div><div class="t" style="left:83px;top:204.70000000000002px;width:59.5px;height:21.5px;line-height:21.5px;font-size:9px;color:#222;-webkit-text-stroke:.12px #222;text-align:center;padding-left:1.5px;box-sizing:border-box;letter-spacing:.45px;">100115</div><div class="t" style="left:142.5px;top:204.70000000000002px;width:47.5px;height:21.5px;line-height:21.5px;font-size:9px;color:#222;-webkit-text-stroke:.12px #222;text-align:center;padding-left:1.5px;box-sizing:border-box;">B2C</div><div class="t" style="left:190px;top:204.70000000000002px;width:57px;height:21.5px;line-height:21.5px;font-size:9px;color:#222;-webkit-text-stroke:.12px #222;text-align:center;padding-left:1.5px;box-sizing:border-box;">Hotel</div><div class="t" style="left:247px;top:204.70000000000002px;width:198px;height:21.5px;line-height:21.5px;font-size:9px;color:#222;-webkit-text-stroke:.12px #222;padding-left:9.5px;box-sizing:border-box;word-spacing:-.1px;">[<i class="k">강</i><i class="k">원</i>, <i class="k">제</i><i class="k">주</i>] <i class="k">가</i><i class="k">성</i><i class="k">비</i> <i class="k">호</i><i class="k">텔</i> <i class="k">모</i><i class="k">음</i><i class="k">전</i></div><div class="t" style="left:445px;top:204.70000000000002px;width:195px;height:21.5px;line-height:21.5px;font-size:9px;color:#222;-webkit-text-stroke:.12px #222;padding-left:9.5px;box-sizing:border-box;word-spacing:-.1px;">[<i class="k">강</i><i class="k">원</i>, <i class="k">제</i><i class="k">주</i>] <i class="k">가</i><i class="k">성</i><i class="k">비</i> <i class="k">호</i><i class="k">텔</i> <i class="k">모</i><i class="k">음</i><i class="k">전</i></div><div class="t" style="left:1142px;top:204.70000000000002px;width:160px;height:21.5px;line-height:21.5px;font-size:9px;color:#222;-webkit-text-stroke:.12px #222;padding-left:8.2px;box-sizing:border-box;letter-spacing:.45px;">20</div><div style="left:0px;top:247.8px;width:1162px;height:1px;background:#e9e9e9;"></div><svg class="a" style="left:15.199999999999989px;top:234.25px" width="7.2" height="6" viewBox="0 0 72 60"><path d="M0 5H72M0 30H72M0 55H72" stroke="#3c3c3c" stroke-width="8.5"/></svg><div class="t" style="left:38px;top:227.20000000000002px;width:45px;height:21.5px;line-height:21.5px;font-size:9px;color:#222;-webkit-text-stroke:.12px #222;text-align:center;padding-left:1.5px;box-sizing:border-box;letter-spacing:.4px;">10</div><div class="t" style="left:83px;top:227.20000000000002px;width:59.5px;height:21.5px;line-height:21.5px;font-size:9px;color:#222;-webkit-text-stroke:.12px #222;text-align:center;padding-left:1.5px;box-sizing:border-box;letter-spacing:.45px;">100151</div><div class="t" style="left:142.5px;top:227.20000000000002px;width:47.5px;height:21.5px;line-height:21.5px;font-size:9px;color:#222;-webkit-text-stroke:.12px #222;text-align:center;padding-left:1.5px;box-sizing:border-box;">B2C</div><div class="t" style="left:190px;top:227.20000000000002px;width:57px;height:21.5px;line-height:21.5px;font-size:9px;color:#222;-webkit-text-stroke:.12px #222;text-align:center;padding-left:1.5px;box-sizing:border-box;">Hotel</div><div class="t" style="left:247px;top:227.20000000000002px;width:198px;height:21.5px;line-height:21.5px;font-size:9px;color:#222;-webkit-text-stroke:.12px #222;padding-left:9.5px;box-sizing:border-box;">Welcome to Amazing Vietnam 2025</div><div class="t" style="left:445px;top:227.20000000000002px;width:195px;height:21.5px;line-height:21.5px;font-size:9px;color:#222;-webkit-text-stroke:.12px #222;padding-left:9.5px;box-sizing:border-box;word-spacing:-.1px;">Amazing Vietnam 2025<i class="k">에</i> <i class="k">오</i><i class="k">신</i> <i class="k">것</i><i class="k">을</i> <i class="k">환</i><i class="k">영</i><i class="k">합</i><i class="k">니</i><i class="k">다</i></div><div class="t" style="left:640px;top:227.20000000000002px;width:160px;height:21.5px;line-height:21.5px;font-size:9px;color:#222;-webkit-text-stroke:.12px #222;padding-left:9.5px;box-sizing:border-box;">Welcome to Amazing Vietnam 2025</div><div class="t" style="left:800px;top:227.20000000000002px;width:196.5999999999999px;height:21.5px;line-height:21.5px;font-size:9px;color:#222;-webkit-text-stroke:.12px #222;padding-left:9.5px;box-sizing:border-box;">Xin chào Amazing Việt Nam 2025</div><div class="t" style="left:996.5999999999999px;top:227.20000000000002px;width:145.4000000000001px;height:21.5px;line-height:21.5px;font-size:9px;color:#222;-webkit-text-stroke:.12px #222;padding-left:9.5px;box-sizing:border-box;"><i class="h">歡</i><i class="h">迎</i><i class="h">來</i><i class="h">到</i><i class="h">精</i><i class="h">彩</i><i class="h">越</i><i class="h">南</i>2025</div><div class="t" style="left:1142px;top:227.20000000000002px;width:160px;height:21.5px;line-height:21.5px;font-size:9px;color:#222;-webkit-text-stroke:.12px #222;padding-left:8.2px;box-sizing:border-box;letter-spacing:.45px;">20</div><div style="left:0px;top:270.3px;width:1162px;height:1px;background:#e9e9e9;"></div><svg class="a" style="left:15.199999999999989px;top:256.75px" width="7.2" height="6" viewBox="0 0 72 60"><path d="M0 5H72M0 30H72M0 55H72" stroke="#3c3c3c" stroke-width="8.5"/></svg><div class="t" style="left:38px;top:249.70000000000002px;width:45px;height:21.5px;line-height:21.5px;font-size:9px;color:#222;-webkit-text-stroke:.12px #222;text-align:center;padding-left:1.5px;box-sizing:border-box;letter-spacing:.4px;">11</div><div class="t" style="left:83px;top:249.70000000000002px;width:59.5px;height:21.5px;line-height:21.5px;font-size:9px;color:#222;-webkit-text-stroke:.12px #222;text-align:center;padding-left:1.5px;box-sizing:border-box;letter-spacing:.45px;">100150</div><div class="t" style="left:142.5px;top:249.70000000000002px;width:47.5px;height:21.5px;line-height:21.5px;font-size:9px;color:#222;-webkit-text-stroke:.12px #222;text-align:center;padding-left:1.5px;box-sizing:border-box;">B2C</div><div class="t" style="left:190px;top:249.70000000000002px;width:57px;height:21.5px;line-height:21.5px;font-size:9px;color:#222;-webkit-text-stroke:.12px #222;text-align:center;padding-left:1.5px;box-sizing:border-box;">Hotel</div><div class="t" style="left:247px;top:249.70000000000002px;width:198px;height:21.5px;line-height:21.5px;font-size:9px;color:#222;-webkit-text-stroke:.12px #222;padding-left:9.5px;box-sizing:border-box;word-spacing:-.1px;">^<i class="k">오</i>^<i class="k">마</i>^<i class="k">이</i>^<i class="k">데</i>^<i class="k">이</i></div><div class="t" style="left:445px;top:249.70000000000002px;width:195px;height:21.5px;line-height:21.5px;font-size:9px;color:#222;-webkit-text-stroke:.12px #222;padding-left:9.5px;box-sizing:border-box;word-spacing:-.1px;">^<i class="k">오</i>^<i class="k">마</i>^<i class="k">이</i>^<i class="k">데</i>^<i class="k">이</i></div><div class="t" style="left:996.5999999999999px;top:249.70000000000002px;width:145.4000000000001px;height:21.5px;line-height:21.5px;font-size:9px;color:#222;-webkit-text-stroke:.12px #222;padding-left:9.5px;box-sizing:border-box;">hi</div><div class="t" style="left:1142px;top:249.70000000000002px;width:160px;height:21.5px;line-height:21.5px;font-size:9px;color:#222;-webkit-text-stroke:.12px #222;padding-left:8.2px;box-sizing:border-box;letter-spacing:.45px;">20</div><div style="left:0px;top:292.8px;width:1162px;height:1px;background:#e9e9e9;"></div><svg class="a" style="left:15.199999999999989px;top:279.25px" width="7.2" height="6" viewBox="0 0 72 60"><path d="M0 5H72M0 30H72M0 55H72" stroke="#3c3c3c" stroke-width="8.5"/></svg><div class="t" style="left:38px;top:272.2px;width:45px;height:21.5px;line-height:21.5px;font-size:9px;color:#222;-webkit-text-stroke:.12px #222;text-align:center;padding-left:1.5px;box-sizing:border-box;letter-spacing:.4px;">12</div><div class="t" style="left:83px;top:272.2px;width:59.5px;height:21.5px;line-height:21.5px;font-size:9px;color:#222;-webkit-text-stroke:.12px #222;text-align:center;padding-left:1.5px;box-sizing:border-box;letter-spacing:.45px;">100059</div><div class="t" style="left:142.5px;top:272.2px;width:47.5px;height:21.5px;line-height:21.5px;font-size:9px;color:#222;-webkit-text-stroke:.12px #222;text-align:center;padding-left:1.5px;box-sizing:border-box;">B2C</div><div class="t" style="left:190px;top:272.2px;width:57px;height:21.5px;line-height:21.5px;font-size:9px;color:#222;-webkit-text-stroke:.12px #222;text-align:center;padding-left:1.5px;box-sizing:border-box;">Hotel</div><div class="t" style="left:247px;top:272.2px;width:198px;height:21.5px;line-height:21.5px;font-size:9px;color:#222;-webkit-text-stroke:.12px #222;padding-left:9.5px;box-sizing:border-box;">The best Japan Hotel</div><div class="t" style="left:445px;top:272.2px;width:195px;height:21.5px;line-height:21.5px;font-size:9px;color:#222;-webkit-text-stroke:.12px #222;padding-left:9.5px;box-sizing:border-box;word-spacing:-.1px;"><i class="k">일</i><i class="k">본</i> <i class="k">베</i><i class="k">스</i><i class="k">트</i> <i class="k">호</i><i class="k">텔</i></div><div class="t" style="left:640px;top:272.2px;width:160px;height:21.5px;line-height:21.5px;font-size:9px;color:#222;-webkit-text-stroke:.12px #222;padding-left:9.5px;box-sizing:border-box;"><i class="h">日</i><i class="h">本</i> Best Hotel</div><div class="t" style="left:800px;top:272.2px;width:196.5999999999999px;height:21.5px;line-height:21.5px;font-size:9px;color:#222;-webkit-text-stroke:.12px #222;padding-left:9.5px;box-sizing:border-box;">The best Japan Hotel</div><div class="t" style="left:996.5999999999999px;top:272.2px;width:145.4000000000001px;height:21.5px;line-height:21.5px;font-size:9px;color:#222;-webkit-text-stroke:.12px #222;padding-left:9.5px;box-sizing:border-box;">The best Japan Hotel</div><div class="t" style="left:1142px;top:272.2px;width:160px;height:21.5px;line-height:21.5px;font-size:9px;color:#222;-webkit-text-stroke:.12px #222;padding-left:8.2px;box-sizing:border-box;letter-spacing:.45px;">20</div><div style="left:38px;top:1px;width:1px;height:292px;background:#e3e3e3;"></div><div style="left:83px;top:1px;width:1px;height:292px;background:#e3e3e3;"></div><div style="left:142.5px;top:1px;width:1px;height:292px;background:#e3e3e3;"></div><div style="left:190px;top:1px;width:1px;height:292px;background:#e3e3e3;"></div><div style="left:247px;top:1px;width:1px;height:292px;background:#e3e3e3;"></div><div style="left:445px;top:1px;width:1px;height:292px;background:#e3e3e3;"></div><div style="left:640px;top:1px;width:1px;height:292px;background:#e3e3e3;"></div><div style="left:800px;top:1px;width:1px;height:292px;background:#e3e3e3;"></div><div style="left:996.5999999999999px;top:1px;width:1px;height:292px;background:#e3e3e3;"></div><div style="left:1142px;top:1px;width:1px;height:292px;background:#e3e3e3;"></div></div>
<div style="left:198px;top:560px;width:1162px;height:4px;background:#e3e3e3;border-bottom:1px solid #8a8a8a;"></div>
<div style="left:198px;top:560px;width:839px;height:5px;background:#999;"></div>
<div class="t" style="left:198px;top:570px;height:15px;line-height:15px;font-size:9.75px;color:#555;">Last Update By: <b style="font-size:9.4px;letter-spacing:-.05px">BICH TUYEN TRUONG</b></div>
<div class="t" style="left:198px;top:585px;height:15px;line-height:15px;font-size:9.75px;color:#555;">Last Update Time: <b style="font-size:9.7px;letter-spacing:.73px;margin-left:.8px">2025-10-16 13:18:16</b></div>
<div style="left:186px;top:624px;width:1185px;height:1px;background:#e4e4e4;"></div>
<div style="left:1311px;top:637px;width:48px;height:18px;border:1px solid #858585;border-radius:2px;box-sizing:border-box;background:#fff;"></div>
<div class="t" style="left:1311px;top:637px;width:48px;height:18px;line-height:18px;font-size:9px;color:#999;text-align:center;">Close</div>
</div>
</body></html>
